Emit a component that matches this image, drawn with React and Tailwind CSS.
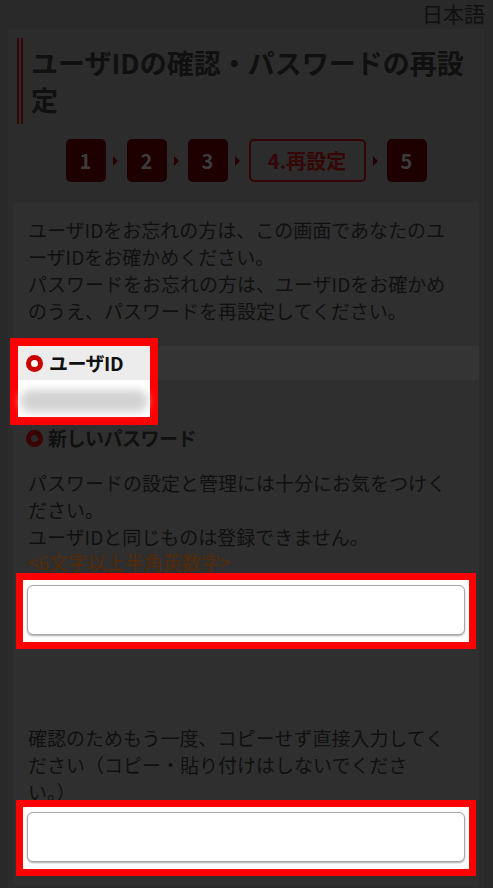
const font = { fontFamily: '"Noto Sans CJK JP", "Noto Sans", sans-serif' };

function StepBox({ label }) {
  return (
    <div className="w-[40px] h-[43px] rounded-[5px] bg-[#1e0000] flex items-center justify-center text-[20px] font-bold text-[#3c3c3c]">
      {label}
    </div>
  );
}

function Arrow() {
  return (
    <div className="w-[21px] flex items-center pl-[7px]">
      <div className="w-0 h-0 border-y-[5px] border-y-transparent border-l-[5px] border-l-[#260000]" />
    </div>
  );
}

function Radio({ active }) {
  return active ? (
    <span className="w-[17px] h-[17px] rounded-full bg-[#c80000] flex items-center justify-center">
      <span className="w-[7px] h-[7px] rounded-full bg-white" />
    </span>
  ) : (
    <span className="w-[17px] h-[17px] rounded-full bg-[#3a0202] flex items-center justify-center">
      <span className="w-[7px] h-[7px] rounded-full bg-[#2a2a2a]" />
    </span>
  );
}

function InputBox({ className }) {
  return (
    <div className={`mx-[10px] bg-white outline-[7px] outline-solid outline-[#ff0000] pt-[5px] pb-[7px] px-[4px] ${className}`}>
      <input
        type="password"
        className="block w-full h-[50px] rounded-[6px] border border-[#a8a8a8] bg-white shadow-[0_1px_2px_rgba(0,0,0,0.35)] outline-none"
      />
    </div>
  );
}

export default function App() {
  return (
    <div className="min-h-[888px] bg-[#292929] text-[#101010] overflow-hidden" style={font}>
      {/* language switch */}
      <div className="h-[29px] flex justify-end items-start pr-[8px]">
        <span className="text-[21px] leading-[27px]">日本語</span>
      </div>

      <div className="ml-[8px] mr-[9px] bg-[#2c2c2c] pb-[20px]">
        {/* page title */}
        <div className="pt-[9px] pl-[9px]">
          <div className="border-l-[6px] border-double border-[#340707] h-[86px] pl-[8px] pt-[6px]">
            <h1 className="text-[27px] leading-[37px] font-bold">
              ユーザIDの確認・パスワードの再設
              <br />定
            </h1>
          </div>
        </div>

        {/* steps */}
        <div className="mt-[15px] flex justify-center">
          <StepBox label="1" />
          <Arrow />
          <StepBox label="2" />
          <Arrow />
          <StepBox label="3" />
          <Arrow />
          <div className="w-[117px] h-[43px] rounded-[5px] border-2 border-[#340404] flex items-center justify-center text-[20px] font-bold text-[#340606]">
            4.再設定
          </div>
          <Arrow />
          <StepBox label="5" />
        </div>

        {/* form body */}
        <div className="mt-[21px] mx-[5px] bg-[#2f2f2f] pb-[16px]">
          <p className="px-[15px] pt-[13px] text-[19px] leading-[27px]">
            ユーザIDをお忘れの方は、この画面であなたのユ
            <br />
            ーザIDをお確かめください。
            <br />
            パスワードをお忘れの方は、ユーザIDをお確かめ
            <br />
            のうえ、パスワードを再設定してください。
          </p>

          {/* user id */}
          <div className="mt-[22px] flex">
            <div className="ml-[5px] w-[132px] h-[71px] bg-white outline-[8px] outline-solid outline-[#ff0000] relative z-10">
              <div className="h-[34px] bg-[#ececec] flex items-center gap-[6px] pl-[8px]">
                <Radio active />
                <span className="text-[19px] font-bold tracking-[-0.5px]">ユーザID</span>
              </div>
              <div className="mt-[10px] mx-[2px] h-[22px] bg-[#d2d2d2] blur-[4px] rounded-full" />
            </div>
            <div className="flex-1">
              <div className="h-[34px] bg-[#343434]" />
            </div>
          </div>

          {/* new password */}
          <div className="h-[42px] flex items-center gap-[5px] pl-[13px]">
            <Radio />
            <span className="text-[19px] font-bold tracking-[-0.5px]">新しいパスワード</span>
          </div>
          <p className="px-[15px] pt-[10px] text-[19px] leading-[27px]">
            パスワードの設定と管理には十分にお気をつけく
            <br />
            ださい。
            <br />
            ユーザIDと同じものは登録できません。
          </p>
          <p className="px-[15px] text-[19px] leading-[24px] text-[#552a06]">&lt;6文字以上半角英数字&gt;</p>
          <InputBox className="mt-[6px]" />

          {/* confirmation */}
          <p className="px-[15px] mt-[82px] text-[19px] leading-[27px]">
            確認のためもう一度、コピーせず直接入力してく
            <br />
            ださい（コピー・貼り付けはしないでくださ
            <br />
            い。）
          </p>
          <InputBox className="mt-[2px]" />
        </div>
      </div>
    </div>
  );
}
